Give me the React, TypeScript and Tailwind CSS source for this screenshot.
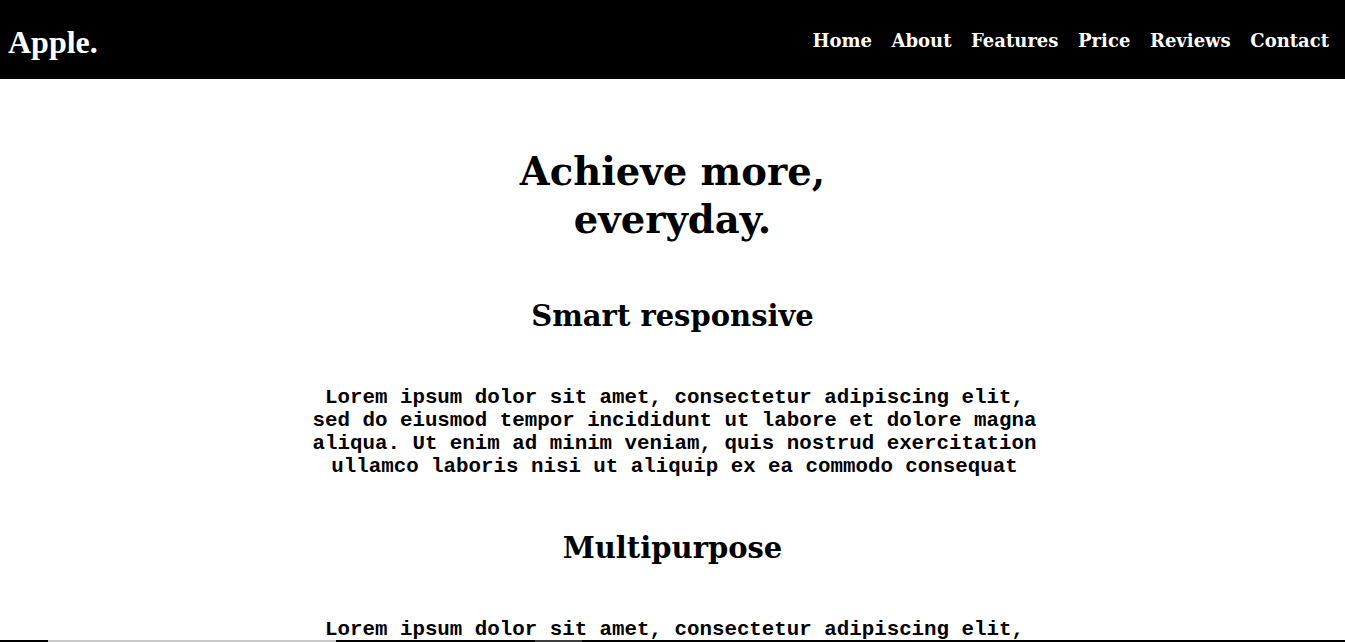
const navLinks = ['Home', 'About', 'Features', 'Price', 'Reviews', 'Contact'];

const lorem =
  'Lorem ipsum dolor sit amet, consectetur adipiscing elit, sed do eiusmod tempor incididunt ut labore et dolore magna aliqua. Ut enim ad minim veniam, quis nostrud exercitation ullamco laboris nisi ut aliquip ex ea commodo consequat';

const sections = ['Smart responsive', 'Multipurpose'];

function App() {
  return (
    <div className="min-h-screen bg-white">
      <header className="flex h-[79px] items-center justify-between bg-black pl-2 pr-4">
        <h1 className="mt-1 font-['Liberation_Serif',serif] text-[32px] font-bold text-white">
          Apple.
        </h1>
        <nav className="mt-[2px] flex gap-[19.6px] font-['DejaVu_Serif',serif] text-[18px] font-bold text-white">
          {navLinks.map((link) => (
            <a key={link} href="#">
              {link}
            </a>
          ))}
        </nav>
      </header>

      <main className="flex flex-col items-center text-center text-black">
        <h2 className="mt-[69px] mb-[2px] font-['DejaVu_Serif',serif] text-[38.5px] leading-[48px] font-bold">
          Achieve more,
          <br />
          everyday.
        </h2>
        {sections.map((title) => (
          <section key={title} className="flex flex-col items-center">
            <h3 className="mt-[50px] font-['DejaVu_Serif',serif] text-[29px] leading-[40px] font-bold">
              {title}
            </h3>
            <p className="mt-[50px] ml-1 w-[740px] font-['Liberation_Mono',monospace] text-[20.8px] leading-[23px] font-bold">
              {lorem}
            </p>
          </section>
        ))}
      </main>

      <div className="fixed bottom-0 left-0 flex h-[2px] w-full">
        <div className="w-[48px] bg-black" />
        <div className="w-[288px] bg-[#c8c8c8]" />
        <div className="w-[199px] bg-black" />
        <div className="w-[47px] bg-[#3c3c3c]" />
        <div className="flex-1 bg-black" />
      </div>
    </div>
  );
}

export default App;
